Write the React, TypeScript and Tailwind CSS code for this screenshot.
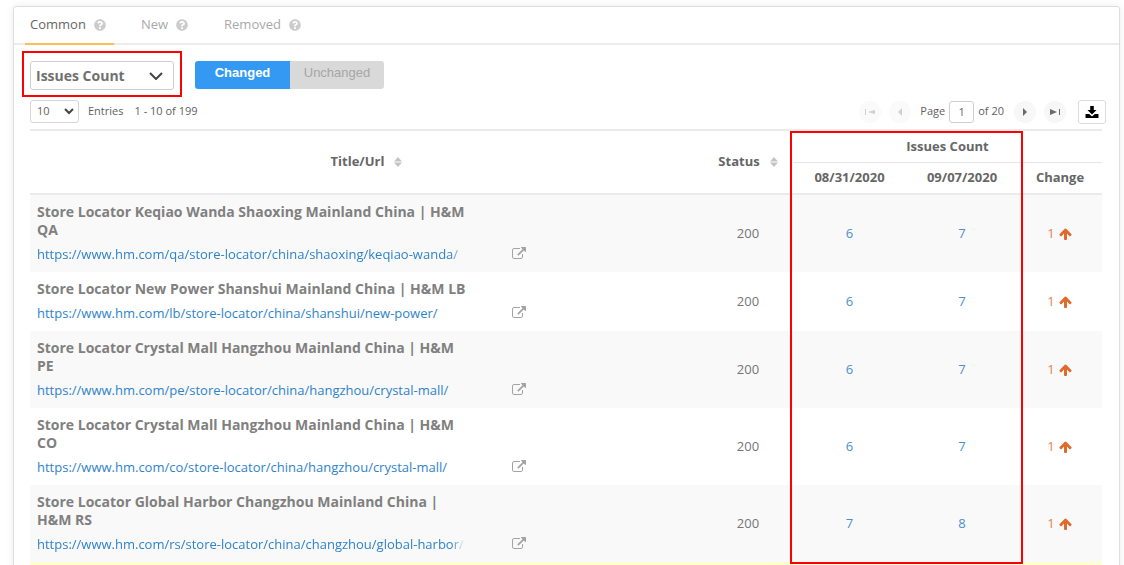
import { clsx } from 'clsx';
import { FaQuestionCircle } from 'react-icons/fa';

interface PageRow {
  title: string;
  url: string;
  status: number;
  previous: number;
  current: number;
  faded?: boolean;
}

const TABS = ['Common', 'New', 'Removed'];

const ROWS: PageRow[] = [
  {
    title: 'Store Locator Keqiao Wanda Shaoxing Mainland China | H&M QA',
    url: 'https://www.hm.com/qa/store-locator/china/shaoxing/keqiao-wanda/',
    status: 200,
    previous: 6,
    current: 7,
    faded: true,
  },
  {
    title: 'Store Locator New Power Shanshui Mainland China | H&M LB',
    url: 'https://www.hm.com/lb/store-locator/china/shanshui/new-power/',
    status: 200,
    previous: 6,
    current: 7,
  },
  {
    title: 'Store Locator Crystal Mall Hangzhou Mainland China | H&M PE',
    url: 'https://www.hm.com/pe/store-locator/china/hangzhou/crystal-mall/',
    status: 200,
    previous: 6,
    current: 7,
  },
  {
    title: 'Store Locator Crystal Mall Hangzhou Mainland China | H&M CO',
    url: 'https://www.hm.com/co/store-locator/china/hangzhou/crystal-mall/',
    status: 200,
    previous: 6,
    current: 7,
  },
  {
    title: 'Store Locator Global Harbor Changzhou Mainland China | H&M RS',
    url: 'https://www.hm.com/rs/store-locator/china/changzhou/global-harbor/',
    status: 200,
    previous: 7,
    current: 8,
    faded: true,
  },
];

function SortIcon() {
  return (
    <svg viewBox="0 0 8 10" className="h-[10px] w-2 fill-[#c4c4c4]" aria-hidden="true">
      <path d="M4 0 8 4.4H0zM4 10 0 5.6h8z" />
    </svg>
  );
}

function ExternalLinkIcon() {
  return (
    <svg viewBox="0 0 1792 1792" className="h-[14px] w-[14px] fill-[#a3a3a3]" aria-hidden="true">
      <path d="M1408 928v320q0 119-84.5 203.5t-203.5 84.5h-832q-119 0-203.5-84.5t-84.5-203.5v-832q0-119 84.5-203.5t203.5-84.5h704q14 0 23 9t9 23v64q0 14-9 23t-23 9h-704q-66 0-113 47t-47 113v832q0 66 47 113t113 47h832q66 0 113-47t47-113v-320q0-14 9-23t23-9h64q14 0 23 9t9 23zm384-864v512q0 26-19 45t-45 19-45-19l-176-176-652 652q-10 10-23 10t-23-10l-114-114q-10-10-10-23t10-23l652-652-176-176q-19-19-19-45t19-45 45-19h512q26 0 45 19t19 45z" />
    </svg>
  );
}

function ArrowUpIcon() {
  return (
    <svg viewBox="0 0 1792 1792" className="h-[14px] w-[14px] fill-[#e06a2c]" aria-hidden="true">
      <path d="M1611 971q0 51-37 90l-75 75q-38 38-91 38-54 0-90-38l-294-293v704q0 52-37.5 84.5t-90.5 32.5h-128q-53 0-90.5-32.5t-37.5-84.5v-704l-294 293q-36 38-90 38t-90-38l-75-75q-38-38-38-90 0-53 38-91l651-651q35-37 90-37 54 0 91 37l651 651q37 39 37 91z" />
    </svg>
  );
}

function DownloadIcon() {
  return (
    <svg viewBox="0 0 14 14" className="h-[14px] w-[14px]" aria-hidden="true">
      <path d="M5.2 1h3.6v4h2.7L7 9.4 2.500 5h2.700z" />
      <path d="M1 9h3.200L7 11.600 9.800 9H13q.5 0 .5.500v3q0 .5-.5.500H1q-.5 0-.5-.500v-3Q.5 9 1 9z" />
    </svg>
  );
}

interface PagerButtonProps {
  label: string;
  path: string;
  disabled?: boolean;
}

function PagerButton({ label, path, disabled = false }: PagerButtonProps) {
  return (
    <button
      type="button"
      aria-label={label}
      disabled={disabled}
      className={clsx(
        'flex h-[22px] w-[22px] items-center justify-center rounded-full',
        disabled ? 'bg-[#fafafa] text-[#cfcfcf]' : 'bg-[#f7f7f7] text-[#6b6b6b]'
      )}
    >
      <svg viewBox="0 0 12 12" className="h-3 w-3 fill-current" aria-hidden="true">
        <path d={path} />
      </svg>
    </button>
  );
}

function TabBar() {
  return (
    <div role="tablist" className="flex h-[38px] border-b-2 border-[#ececec] pl-[11px]">
      {TABS.map((tab, i) => (
        <button
          key={tab}
          type="button"
          role="tab"
          aria-selected={i === 0}
          className={clsx(
            '-mb-[2px] flex items-center gap-2 border-b-2 text-[13px]',
            i === 0
              ? 'mr-[23px] border-[#fdbd57] pr-2 pl-[5px] text-[#666]'
              : 'mr-7 border-transparent px-[4px] text-[#a9a9a9]'
          )}
        >
          {tab}
          <FaQuestionCircle className="h-3 w-3 text-[#cccccc]" />
        </button>
      ))}
    </div>
  );
}

function Toolbar() {
  return (
    <div className="flex items-start pt-[6px] pl-2">
      <div className="border-2 border-[#f00] px-[6px] pt-[8px] pb-[5px]">
        <div className="relative">
          <select
            aria-label="Metric"
            className="block h-[29px] w-36 appearance-none rounded-[3px] border border-[#cfcfcf] bg-white pl-[5px] text-sm font-bold text-[#707070]"
          >
            <option>Issues Count</option>
          </select>
          <svg
            viewBox="0 0 14 8"
            className="pointer-events-none absolute top-[11px] right-[11px] h-2 w-[14px] fill-none stroke-[#444] stroke-2"
            aria-hidden="true"
          >
            <path d="M1 1l6 6 6-6" />
          </svg>
        </div>
      </div>
      <div className="mt-[10px] ml-[13px] flex h-7 overflow-hidden rounded-[3px] font-['Liberation_Sans',sans-serif] text-[13px]">
        <button type="button" className="w-[95px] bg-[#3399f3] pb-[5px] font-bold text-white">
          Changed
        </button>
        <button type="button" className="w-[94px] bg-[#d9d9d9] pb-[5px] text-[#a6a6a6]">
          Unchanged
        </button>
      </div>
    </div>
  );
}

function Pager() {
  return (
    <div className="mt-px flex h-[27px] items-center pr-[13px] pl-4 text-[11px] text-[#5f5f5f]">
      <div className="relative">
        <select
          aria-label="Entries per page"
          className="block h-[23px] w-[49px] appearance-none rounded-[3px] border border-[#d5d5d5] bg-white pl-[6px]"
        >
          <option>10</option>
        </select>
        <svg
          viewBox="0 0 10 7"
          className="pointer-events-none absolute top-[8px] right-[5px] h-[7px] w-[10px] fill-none stroke-[#444] stroke-2"
          aria-hidden="true"
        >
          <path d="M1 1l4 4 4-4" />
        </svg>
      </div>
      <span className="ml-[9px]">Entries</span>
      <span className="ml-[11px]">1 - 10 of 199</span>
      <div className="ml-auto flex items-center">
        <PagerButton label="First page" path="M1 3h1v6H1zM11 4v4L4 6z" disabled />
        <div className="ml-2">
          <PagerButton label="Previous page" path="M8 2v8L4 6z" disabled />
        </div>
        <label className="ml-[9px] flex items-center gap-1">
          Page
          <input
            defaultValue="1"
            className="h-[22px] w-[25px] rounded-[3px] border border-[#cfcfcf] text-center"
          />
        </label>
        <span className="ml-1">of 20</span>
        <div className="ml-[10px] flex gap-2">
          <PagerButton label="Next page" path="M4 2v8l4-4z" />
          <PagerButton label="Last page" path="M10 3h1v6h-1zM1 3v6l7-3z" />
        </div>
        <button
          type="button"
          aria-label="Download"
          className="ml-3 flex h-6 w-7 items-center justify-center rounded-[3px] border border-[#dcdcdc]"
        >
          <DownloadIcon />
        </button>
      </div>
    </div>
  );
}

function IssuesTable() {
  return (
    <table className="w-full table-fixed border-collapse text-[13px] text-[#757575]">
      <colgroup>
        <col />
        <col className="w-[90px]" />
        <col className="w-[113px]" />
        <col className="w-[112px]" />
        <col className="w-[84px]" />
      </colgroup>
      <thead className="border-y-2 border-[#ebebeb] text-[#666]">
        <tr className="h-8">
          <th rowSpan={2}>
            <span className="inline-flex items-center gap-[10px]">
              Title/Url <SortIcon />
            </span>
          </th>
          <th rowSpan={2}>
            <span className="inline-flex items-center gap-[10px]">
              Status <SortIcon />
            </span>
          </th>
          <th colSpan={3} className="border-b border-[#e6e6e6]">
            Issues Count
          </th>
        </tr>
        <tr className="h-8">
          <th>08/31/2020</th>
          <th>09/07/2020</th>
          <th>Change</th>
        </tr>
      </thead>
      <tbody>
        {ROWS.map((row) => (
          <tr key={row.url} className="odd:bg-[#f9f9f9]">
            <td className="px-[7px] pt-2 pb-[9px]">
              <div className="w-[432px] text-sm/[18px] font-bold text-[#808080]">{row.title}</div>
              <div className="mt-[6px] flex h-[18px] items-center">
                <a
                  href={row.url}
                  className={clsx(
                    'w-[434px] overflow-hidden leading-[18px] whitespace-nowrap text-[#2f83cb]',
                    row.faded && 'mask-r-from-[414px] mask-r-to-[428px]'
                  )}
                >
                  {row.url}
                </a>
                <a href={row.url} aria-label="Open page" className="ml-[41px]">
                  <ExternalLinkIcon />
                </a>
              </div>
            </td>
            <td className="text-center">{row.status}</td>
            <td className="text-center">
              <a href="#previous" className="text-[#4a90cf]">{row.previous}</a>
            </td>
            <td className="text-center">
              <a href="#current" className="text-[#4a90cf]">{row.current}</a>
            </td>
            <td>
              <span className="flex items-center justify-center gap-1 text-[#e57f4d]">
                {row.current - row.previous}
                <ArrowUpIcon />
              </span>
            </td>
          </tr>
        ))}
        <tr className="h-[59px] bg-[#ffffcf]">
          <td colSpan={5} />
        </tr>
      </tbody>
    </table>
  );
}

export default function App() {
  return (
    <main className="h-screen overflow-hidden bg-white pt-[6px] pr-1 pl-[13px] font-['Open_Sans',sans-serif]">
      <section className="rounded-[3px] border border-[#dedede] bg-white shadow-[0_0_8px_rgba(0,0,0,0.08)]">
        <TabBar />
        <Toolbar />
        <Pager />
        <div className="relative mt-1 mr-[17px] ml-4">
          <IssuesTable />
          {/* Highlight over the two dated columns */}
          <div className="pointer-events-none absolute top-[2px] right-[79px] bottom-[57px] w-[233px] border-2 border-[#f00]" />
        </div>
      </section>
    </main>
  );
}
